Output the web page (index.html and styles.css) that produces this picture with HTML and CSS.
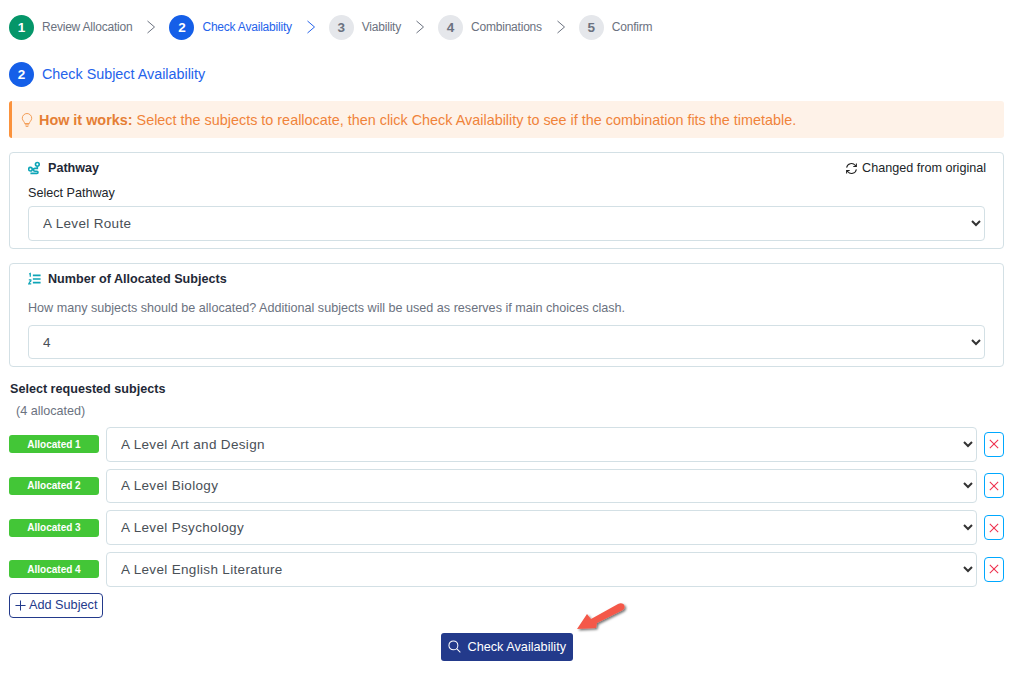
FILE: index.html
```html
<!DOCTYPE html>
<html lang="en">
<head>
<meta charset="utf-8">
<title>Check Subject Availability</title>
<link rel="stylesheet" href="styles.css">
</head>
<body>
<main class="page">
  <nav class="stepper">
    <span class="num done">1</span><span class="step-label">Review Allocation</span>
    <svg class="chev" viewBox="0 0 10 14"><path d="M1.5 1l7 6-7 6"/></svg>
    <span class="num active">2</span><span class="step-label current">Check Availability</span>
    <svg class="chev blue" viewBox="0 0 10 14"><path d="M1.5 1l7 6-7 6"/></svg>
    <span class="num">3</span><span class="step-label">Viability</span>
    <svg class="chev" viewBox="0 0 10 14"><path d="M1.5 1l7 6-7 6"/></svg>
    <span class="num">4</span><span class="step-label">Combinations</span>
    <svg class="chev" viewBox="0 0 10 14"><path d="M1.5 1l7 6-7 6"/></svg>
    <span class="num">5</span><span class="step-label">Confirm</span>
  </nav>

  <h2 class="section-title"><span class="num active">2</span>Check Subject Availability</h2>

  <div class="alert">
    <svg class="bulb" viewBox="0 0 16 16"><path d="M2.6 6a5.4 5.4 0 1 1 10.8 0c0 1.500-.8 2.500-1.500 3.400-.6.800-1.100 1.500-1.200 2.600H5.300c-.1-1.100-.6-1.800-1.200-2.600C3.400 8.500 2.600 7.500 2.600 6zM5.600 13.500h4.800M6.500 15.300h3"/></svg>
    <p><strong>How it works:</strong> Select the subjects to reallocate, then click Check Availability to see if the combination fits the timetable.</p>
  </div>

  <section class="card pathway">
    <div class="card-head">
      <h3 class="card-title">
        <svg class="card-icon" viewBox="0 0 16 16"><circle cx="11.500" cy="3.500" r="2.300"/><circle cx="3" cy="9.500" r="2.200"/><path d="M11.500 6v2.500H8.500a1.700 1.700 0 0 0 0 3.500h2.500a1.200 1.200 0 0 1 0 2.600H3"/></svg>
        Pathway
      </h3>
      <span class="changed">
        <svg class="sync" viewBox="0 0 16 16"><path d="M2 7a6 6 0 0 1 10.700-2.700L14 5.600M14 1.800v3.800h-3.800M14 9a6 6 0 0 1-10.700 2.700L2 10.400M2 14.200v-3.800h3.800"/></svg>
        Changed from original
      </span>
    </div>
    <label class="field-label" for="pathway">Select Pathway</label>
    <select id="pathway" class="select"><option>A Level Route</option></select>
  </section>

  <section class="card number">
    <h3 class="card-title">
      <svg class="card-icon" viewBox="0 0 16 16"><path class="bars" d="M6 3.500h9.500M6 8h9.500M6 12.500h9.500"/><path class="digits" d="M1.500 2l1.300-.8v4M1 9h2.500q.5 2-1.200 2.500L1 14h3"/></svg>
      Number of Allocated Subjects
    </h3>
    <p class="help">How many subjects should be allocated? Additional subjects will be used as reserves if main choices clash.</p>
    <select class="select"><option>4</option></select>
  </section>

  <h4 class="req-title">Select requested subjects</h4>
  <p class="req-count">(4 allocated)</p>

  <div class="rows">
    <div class="row">
      <span class="badge">Allocated 1</span>
      <select class="select"><option>A Level Art and Design</option></select>
      <button class="remove" aria-label="Remove"><svg viewBox="0 0 12 12"><path d="M1 1l10 10M11 1L1 11"/></svg></button>
    </div>
    <div class="row">
      <span class="badge">Allocated 2</span>
      <select class="select"><option>A Level Biology</option></select>
      <button class="remove" aria-label="Remove"><svg viewBox="0 0 12 12"><path d="M1 1l10 10M11 1L1 11"/></svg></button>
    </div>
    <div class="row">
      <span class="badge">Allocated 3</span>
      <select class="select"><option>A Level Psychology</option></select>
      <button class="remove" aria-label="Remove"><svg viewBox="0 0 12 12"><path d="M1 1l10 10M11 1L1 11"/></svg></button>
    </div>
    <div class="row">
      <span class="badge">Allocated 4</span>
      <select class="select"><option>A Level English Literature</option></select>
      <button class="remove" aria-label="Remove"><svg viewBox="0 0 12 12"><path d="M1 1l10 10M11 1L1 11"/></svg></button>
    </div>
  </div>

  <button class="add"><svg viewBox="0 0 12 12"><path d="M6 .5v11M.5 6h11"/></svg>Add Subject</button>

  <div class="actions">
    <button class="check">
      <svg viewBox="0 0 14 14"><circle cx="5.800" cy="5.800" r="4.800"/><path d="M9.300 9.300l4 4"/></svg>
      Check Availability
    </button>
    <svg class="arrow" viewBox="0 0 56 40"><defs><filter id="sh" x="-20%" y="-20%" width="150%" height="150%"><feDropShadow dx="1.500" dy="1.500" stdDeviation="1" flood-color="#000" flood-opacity=".55"/></filter></defs><path filter="url(#sh)" d="M5 30L15 15l4 5L46 5c3-1.500 6-.5 6.500 2s-1 3.500-2.500 4.500L25 24l-1 5z"/></svg>
  </div>
</main>
</body>
</html>
```
FILE: styles.css
```css
* { box-sizing: border-box; }
html, body { margin: 0; background: #fff; }
body { font-family: "Liberation Sans", Arial, sans-serif; font-size: 12.6px; color: #212529; }
.page { padding: 14px 11px 13px 9px; }

.stepper { display: flex; align-items: center; height: 26px; }
.num { flex: none; display: flex; align-items: center; justify-content: center; width: 25px; height: 25px; border-radius: 50%; background: #e5e7eb; color: #6b7280; font-size: 13.5px; font-weight: 700; }
.num.done { background: #059669; color: #fff; }
.num.active { background: #155fe8; color: #fff; }
.step-label { margin-left: 8px; color: #6b7280; font-size: 12px; letter-spacing: -.212px; }
.step-label.current { color: #2563eb; }
.chev { flex: none; width: 10px; height: 14px; margin: 0 13px 0 14px; fill: none; stroke: #6b7280; stroke-width: 1; }
.chev.blue { stroke: #2563eb; }

.section-title { display: flex; align-items: center; gap: 8px; margin: 21px 0 0; height: 26px; font-size: 14.35px; font-weight: 400; color: #2563eb; }

.alert { display: flex; align-items: center; height: 37px; margin-top: 14px; padding-left: 8px; background: #fef2e8; border-left: 3px solid #fb923c; border-radius: 3px; color: #f0833a; font-size: 14.4px; }
.alert p { margin: 0; }
.alert strong { color: #e57e35; }
.bulb { flex: none; width: 14px; height: 16px; margin-right: 5px; fill: none; stroke: #f39a52; stroke-width: 1.100; }

.card { margin-top: 14px; padding: 0 18px; border: 1px solid #d3e0e5; border-radius: 4px; }
.pathway { height: 97px; padding-top: 7px; }
.number { height: 104px; padding-top: 7px; }
.card-head { display: flex; justify-content: space-between; align-items: center; }
.card-title { display: flex; align-items: center; margin: 0; height: 16px; font-size: 12.6px; font-weight: 700; color: #1f2937; }
.card-icon { width: 13px; height: 14px; margin-right: 7px; fill: none; stroke: #0ea5b7; stroke-width: 2; }
.card-icon .digits { stroke-width: 1.500; }
.changed { display: flex; align-items: center; gap: 4px; margin-right: -1px; color: #212529; }
.sync { width: 13px; height: 13px; fill: none; stroke: #222; stroke-width: 1.300; }
.field-label { display: block; margin-top: 10px; line-height: 14px; }
.help { margin: 14px 0 0; line-height: 14px; color: #6b7280; }

.select { display: block; width: 100%; appearance: none; -webkit-appearance: none; height: 34.67px; padding: 0 14px; border: 1px solid #d3e0e5; border-radius: 4px; color: #495057; background: #fff url("data:image/svg+xml,%3Csvg xmlns='http://www.w3.org/2000/svg' viewBox='0 0 10 7'%3E%3Cpath d='M1 1l4 4 4-4' fill='none' stroke='%23333' stroke-width='2'/%3E%3C/svg%3E") no-repeat right 3px center / 10px 7px; font: 13.5px "Liberation Sans", Arial, sans-serif; letter-spacing: .33px; }
.pathway .select { margin-top: 6px; }
.number .select { margin-top: 10px; height: 34px; }

.req-title { margin: 14px 0 0 1px; font-size: 12.6px; line-height: 16px; font-weight: 700; color: #1f2937; }
.req-count { margin: 6px 0 0 7px; line-height: 16px; color: #6b7280; }

.rows { display: flex; flex-direction: column; gap: 7px; margin-top: 8px; }
.row { display: flex; align-items: center; }
.row .select { flex: 1; min-width: 0; }
.badge { flex: none; width: 90px; height: 18px; margin-right: 7px; display: flex; align-items: center; justify-content: center; background: #43c637; border-radius: 3px; color: #fff; font-size: 10px; font-weight: 700; }
.remove { flex: none; width: 20px; height: 25px; margin-left: 7px; padding: 0; display: flex; align-items: center; justify-content: center; background: #fff; border: 1px solid #00a8ff; border-radius: 4px; }
.remove svg { width: 10px; height: 10px; fill: none; stroke: #ee3350; stroke-width: 1.300; }

.add { display: flex; align-items: center; gap: 3px; height: 25px; width: 94px; margin-top: 6px; padding: 0 0 0 5px; background: #fff; border: 1px solid #233a8b; border-radius: 4px; color: #233a8b; font: 12.7px "Liberation Sans", Arial, sans-serif; }
.add svg { width: 11px; height: 11px; fill: none; stroke: #233a8b; stroke-width: 1.100; }

.actions { position: relative; display: flex; justify-content: center; margin-top: 15px; }
.check { display: flex; align-items: center; gap: 7px; width: 132px; height: 28px; padding: 0 0 0 7px; background: #233a8b; border: 0; border-radius: 3px; color: #fff; font: 12.7px "Liberation Sans", Arial, sans-serif; }
.check svg { width: 13px; height: 13px; fill: none; stroke: #fff; stroke-width: 1.100; }
.arrow { position: absolute; left: 563px; top: -34px; width: 56px; height: 40px; fill: #f4594a; }
```
